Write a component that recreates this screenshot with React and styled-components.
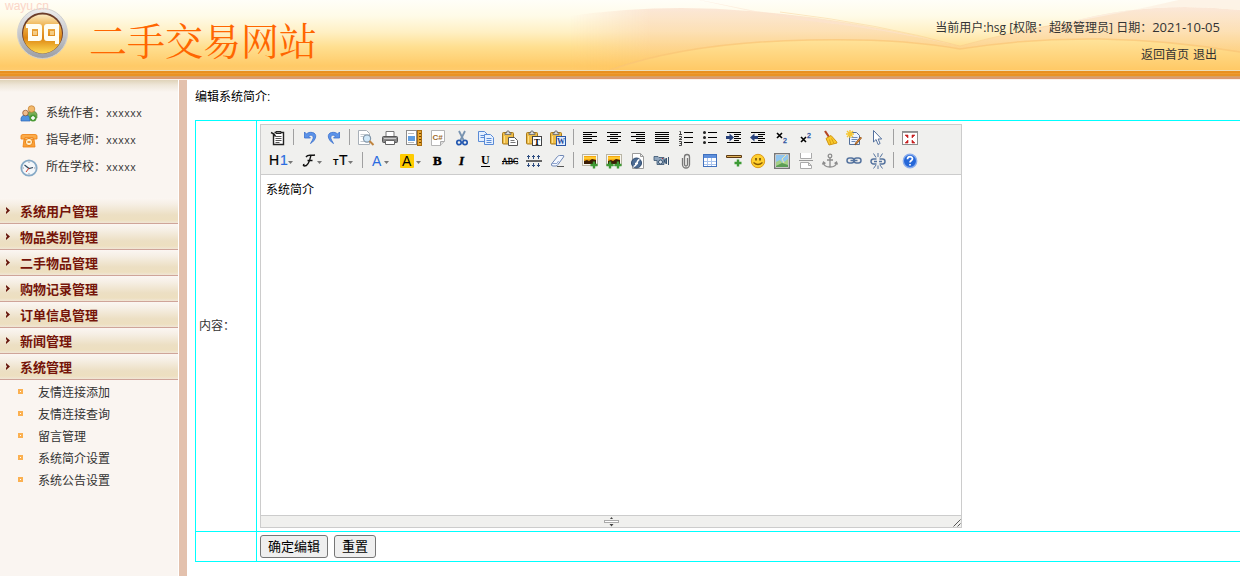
import React from 'react';
import styled, { createGlobalStyle } from 'styled-components';

const GlobalStyle = createGlobalStyle`
  *, *::before, *::after { box-sizing: border-box; }
  body {
    margin: 0;
    background: #fff;
    color: #333;
    font: 12px/16px "Liberation Sans", "Noto Sans CJK SC", sans-serif;
  }
  a { color: inherit; text-decoration: none; }
  ul { list-style: none; margin: 0; padding: 0; }
`;

/* ---------- header ---------- */

const Header = styled.header`
  position: relative;
  display: flex;
  height: 80px;
  padding-bottom: 10px;
  background:
    linear-gradient(#eeddb4 0 1px, #e8901f 1px 3px, #ee9c31 3px 4px, #e99224 4px 6px, #d7a261 6px 7px, #dc9a6e 7px 9px, #fbf0e8 9px 10px) bottom / 100% 10px no-repeat,
    linear-gradient(#fffef8 0, #fffbe8 16px, #fff0c4 32px, #ffdf90 47px, #ffca67 66px, #ffcb6c 70px);
`;

const Waves = styled.svg`
  position: absolute;
  top: 0;
  right: 0;
  width: 670px;
  height: 70px;
`;

const Watermark = styled.span`
  position: absolute;
  top: 0;
  left: 5px;
  z-index: 1;
  font-size: 12px;
  line-height: 12px;
  color: #fbd5c8;
`;

const Brand = styled.div`
  position: relative;
  display: flex;
  align-items: flex-start;
  gap: 21px;
  padding: 8px 0 0 17px;
`;

const SiteName = styled.h1`
  margin: 0;
  padding-top: 7px;
  font-family: "Noto Serif CJK SC", "Noto Sans CJK SC", serif;
  font-size: 38px;
  line-height: 48px;
  font-weight: 400;
  color: #ff6600;
  white-space: nowrap;
`;

const UserInfo = styled.div`
  position: relative;
  margin-left: auto;
  padding: 19px 20px 0 0;
  text-align: right;
  color: #333;
`;

const InfoLine = styled.p`
  margin: 0 0 11px;
  white-space: nowrap;
`;

const Latin = styled.span`
  font-family: "Open Sans", sans-serif;
  font-size: ${(p) => (p.$large ? 13 : 12)}px;
`;

const HeaderLinks = styled.nav`
  display: flex;
  justify-content: flex-end;
  gap: 4px;
  padding-right: 3px;
`;

/* ---------- body layout ---------- */

const Body = styled.div`
  display: grid;
  grid-template-columns: 179px minmax(0, 1fr);
  min-height: calc(100vh - 80px);
`;

const Sidebar = styled.aside`
  border-right: 1px solid #fff;
  background: linear-gradient(#dfd3b9, #eee6d8 5px, #faf5f1 12px) top / 100% 12px no-repeat #faf5f1;
`;

const Facts = styled.ul`
  padding: 20px 0 0 20px;
  height: 118px;
`;

const Fact = styled.li`
  display: flex;
  align-items: center;
  gap: 8px;
  height: 27px;
`;

const FactLabel = styled.span`
  white-space: nowrap;
`;

const FactValue = styled.span`
  font: 10px/16px "Liberation Mono", monospace;
`;

const MenuHeading = styled.button`
  display: flex;
  align-items: center;
  gap: 10px;
  width: 100%;
  height: 26px;
  padding: 2px 0 0 5px;
  border: 0;
  border-bottom: 1px solid #cfa499;
  background: linear-gradient(#fbf6f2 0, #f6efe5 6px, #ecdfc3 17px, #eddfc0 22px, #f0e6d6 25px);
  color: #751409;
  font: bold 13px/16px "Liberation Sans", "Noto Sans CJK SC", sans-serif;
  cursor: pointer;
  svg { margin-bottom: 2px; }
`;

const SubItem = styled.li`
  display: flex;
  align-items: center;
  gap: 15px;
  height: 22px;
  padding-left: 18px;
  a { padding-top: 3px; }
  &::before {
    content: '';
    width: 5px;
    height: 5px;
    border: 2px solid #fbb050;
    background: #fff;
  }
`;

const Main = styled.main`
  border-left: 8px solid #e3c1ad;
  padding: 9px 0 14px 8px;
`;

const PageTitle = styled.h2`
  margin: 0 0 15px;
  font-size: 12px;
  line-height: 16px;
  font-weight: normal;
  color: #000;
`;

const FormGrid = styled.form`
  display: grid;
  grid-template-columns: 60px minmax(0, 1fr);
  border: solid #00ffff;
  border-width: 1px 0 0 1px;
`;

const FormCell = styled.div`
  display: flex;
  align-items: center;
  gap: 6px;
  padding: 3px;
  border: solid #00ffff;
  border-width: 0 0 1px ${(p) => (p.$divided ? '1px' : '0')};
`;

const PushButton = styled.button`
  height: 23px;
  padding: 0 7px;
  border: 1px solid #767676;
  border-radius: 3px;
  background: #efefef;
  color: #000;
  font: 13px/20px "Liberation Sans", "Noto Sans CJK SC", sans-serif;
`;

/* ---------- editor ---------- */

const Editor = styled.div`
  width: 100%;
  max-width: 702px;
  border: 1px solid #ccc;
  background: #fff;
`;

const Toolbar = styled.div`
  padding: 2px 5px 1px;
  border-bottom: 1px solid #ccc;
  background: #f0f0ee;
`;

const ToolRow = styled.div`
  display: flex;
  height: 23px;
`;

const Tool = styled.button`
  display: block;
  flex: none;
  width: ${(p) => p.$width + 8}px;
  height: 22px;
  padding: 3px 4px;
  border: 0;
  background: none;
  cursor: pointer;
  svg { display: block; overflow: visible; }
`;

const Separator = styled.span`
  flex: none;
  width: 1px;
  height: 16px;
  margin: 2px 4px 0 3px;
  background: #a0a0a0;
`;

const TextArea = styled.textarea`
  display: block;
  width: 100%;
  height: 340px;
  padding: 7px 5px;
  border: 0;
  outline: 0;
  resize: none;
  color: #000;
  background: #fff;
  font: 12px/16px "Liberation Sans", "Noto Sans CJK SC", sans-serif;
`;

const StatusBar = styled.div`
  display: grid;
  grid-template-columns: 9px 1fr 9px;
  justify-items: center;
  height: 12px;
  border-top: 1px solid #ccc;
  background: #f0f0ee;
  svg { display: block; }
`;

/* ---------- icons ---------- */

const serif = '"Liberation Serif", serif';
const sans = '"Liberation Sans", sans-serif';

const Lines = ({ rows }) => (
  <g stroke="#000" shapeRendering="crispEdges">
    {rows.map(([a, b], i) => (
      <path key={i} d={`M${a} ${2.5 + i * 2}H${b}`} />
    ))}
  </g>
);
const Caret = ({ x }) => <path d={`M${x} 8h5l-2.500 3z`} fill="#777" />;
const Clipboard = () => (
  <g>
    <rect x=".5" y="2.500" width="11" height="11.500" rx="1" fill="#eebd47" stroke="#a8791a" />
    <path d="M3 4.500V3h1.500l.5-2h2l.5 2H9v1.500z" fill="#ddd" stroke="#666" strokeWidth=".8" />
    <path d="M2.500 6v7" stroke="#ffe08a" />
  </g>
);
const Plus = ({ x, y }) => (
  <path d={`M${x} ${y - 3.5}v7M${x - 3.5} ${y}h7`} stroke="#3d9b35" strokeWidth="2.400" />
);
const Photo = () => (
  <g>
    <rect x=".5" y="1.500" width="15" height="11" fill="#f7f5ee" stroke="#b9b5a5" />
    <rect x="2" y="3" width="12" height="8" fill="#f5a80f" />
    <path d="M2 4h12v2H2z" fill="#ffc92e" />
    <path d="M2 8l3-1 2 1 3-2 4 1v4H2z" fill="#3a1d05" />
  </g>
);
const Page = () => (
  <path d="M2.500 .5h8l3 3v12h-11z M10.500 .5v3h3" fill="#fff" stroke="#9b9b9b" />
);
const CurvedArrow = () => (
  <path d="M2.500 2v6h6L6.500 6c3-2 6 0 4 4l-2 3.500c6-3.500 7-10 2-11C8 2 6 2.500 4.500 4z" fill="#5b93ea" stroke="#3a70cc" strokeWidth=".8" />
);

const ICONS = {
  source: (
    <g fill="none" stroke="#222">
      <path d="M3.500 4v10.500h10V2.500h-9" fill="#fff" strokeWidth="1.400" />
      <path d="M6 1.500h5v2H6z" fill="#888" />
      <path d="M5.500 6.500h6M5.500 8.500h6M5.500 10.500h6M5.500 12.500h4" stroke="#555" />
      <path d="M1 2.500l3 1.500 1.500 2.500" strokeWidth="1.500" />
    </g>
  ),
  undo: <CurvedArrow />,
  redo: <g transform="matrix(-1 0 0 1 16 0)"><CurvedArrow /></g>,
  preview: (
    <g>
      <path d="M.5 .5h8l3 3v11H.5z" fill="#fff" stroke="#a8b0b8" />
      <path d="M2.500 4.500h5M2.500 6.500h3M2.500 11.500h5" stroke="#c3c9cf" />
      <circle cx="9" cy="8.500" r="3.600" fill="#cfe7f8" stroke="#8296a8" strokeWidth="1.200" />
      <path d="M11.500 11l4 4" stroke="#c0843f" strokeWidth="2" />
    </g>
  ),
  print: (
    <g>
      <path d="M4 1.500h8V7H4z" fill="#fff" stroke="#777" />
      <rect x=".5" y="6.500" width="15" height="6" rx="1" fill="#888" stroke="#555" />
      <path d="M2 8.500h12" stroke="#ccc" />
      <path d="M3.500 10.500h9v4h-9z" fill="#fff" stroke="#666" />
    </g>
  ),
  template: (
    <g>
      <rect x=".5" y=".5" width="10" height="14" fill="#fff" stroke="#222" strokeDasharray="1 1" />
      <path d="M2 6h7v5H2z" fill="#5f9de0" />
      <path d="M2 3.500h6M2 12.500h6" stroke="#bbb" />
      <rect x="11.500" y=".5" width="4" height="15" fill="#e8a52f" stroke="#a96d10" />
      <path d="M13 3.500h2M13 6.500h2M13 9.500h2M13 12.500h2" stroke="#6e4300" />
    </g>
  ),
  code: (
    <g>
      <path d="M1.500 .5h13v11l-4 4h-9z" fill="#fff" stroke="#b5b5b5" />
      <path d="M10.500 15.500v-4h4" fill="#ddd" stroke="#aaa" />
      <text x="2.500" y="10" fontSize="8" fontWeight="bold" fontFamily={sans} fill="#a06a2c">C#</text>
    </g>
  ),
  cut: (
    <g fill="none">
      <path d="M5 1l4.500 9M11 1L6.500 10" stroke="#7893b0" strokeWidth="1.800" />
      <circle cx="5" cy="12.500" r="2.200" stroke="#2458b0" strokeWidth="1.700" />
      <circle cx="11" cy="12.500" r="2.200" stroke="#2458b0" strokeWidth="1.700" />
    </g>
  ),
  copy: (
    <g fill="#e5f0ff" stroke="#5a8bd6">
      <path d="M.5 1.500h6l3 3v7h-9z" />
      <path d="M2.500 5.500h4M2.500 7.500h4" />
      <path d="M6.500 4.500h6l3 3v7h-9z" />
      <path d="M8.500 8.500h5M8.500 10.500h5M8.500 12.500h5" />
    </g>
  ),
  paste: (
    <g>
      <Clipboard />
      <path d="M6.500 7.500h6l3 3v5h-9z" fill="#fff" stroke="#555" />
      <path d="M8.500 10.500h4M8.500 12.500h5" stroke="#777" />
    </g>
  ),
  plainpaste: (
    <g>
      <Clipboard />
      <rect x="6.500" y="6.500" width="9" height="9" fill="#fff" stroke="#444" />
      <text x="8" y="14.500" fontSize="9" fontWeight="bold" fontFamily={serif}>T</text>
    </g>
  ),
  wordpaste: (
    <g>
      <Clipboard />
      <rect x="6.500" y="6.500" width="9" height="9" fill="#e2edff" stroke="#2a56a5" />
      <text x="7" y="14" fontSize="8" fontWeight="bold" fontFamily={serif} fill="#1a4798">W</text>
    </g>
  ),
  justifyleft: <Lines rows={[[1, 15], [1, 10], [1, 15], [1, 10], [1, 15], [1, 10]]} />,
  justifycenter: <Lines rows={[[1, 15], [4, 12], [1, 15], [4, 12], [1, 15], [4, 12]]} />,
  justifyright: <Lines rows={[[1, 15], [6, 15], [1, 15], [6, 15], [1, 15], [6, 15]]} />,
  justifyfull: <Lines rows={[[1, 15], [1, 15], [1, 15], [1, 15], [1, 15], [1, 15]]} />,
  ordered: (
    <g>
      <path d="M6 2.500h9M6 7.500h9M6 12.500h9" stroke="#000" shapeRendering="crispEdges" />
      <path d="M1.500 1.500h1v3M1 4.500h3M1 6.500h2.500v1.500L1 9.500h3M1 11.500h2.500v4H1M1.500 13.500h2" fill="none" stroke="#333" strokeWidth=".9" />
    </g>
  ),
  unordered: (
    <g>
      <path d="M6 2.500h9M6 7.500h9M6 12.500h9" stroke="#000" shapeRendering="crispEdges" />
      <circle cx="2.500" cy="2.500" r="1.500" fill="#222" />
      <circle cx="2.500" cy="7.500" r="1.500" fill="#222" />
      <circle cx="2.500" cy="12.500" r="1.500" fill="#222" />
    </g>
  ),
  indent: (
    <g>
      <path d="M1 2.500h14M8 4.500h7M8 6.500h5M8 8.500h7M8 10.500h5M1 12.500h14" stroke="#000" shapeRendering="crispEdges" />
      <path d="M0 3h8v9H0z" fill="#f0f0ee" />
      <path d="M0 6h3.500V3.500L8 7.500l-4.500 4V9H0z" fill="#28427c" />
    </g>
  ),
  outdent: (
    <g>
      <path d="M1 2.500h14M8 4.500h7M8 6.500h5M8 8.500h7M8 10.500h5M1 12.500h14" stroke="#000" shapeRendering="crispEdges" />
      <path d="M0 3h8v9H0z" fill="#f0f0ee" />
      <path d="M8 6H4.500V3.500L0 7.500l4.500 4V9H8z" fill="#28427c" />
    </g>
  ),
  subscript: (
    <g fontFamily={sans}>
      <path d="M3 3l5 5M8 3L3 8" stroke="#000" strokeWidth="1.600" />
      <text x="9" y="13" fontSize="7" fill="#264f9c" stroke="#264f9c" strokeWidth=".3">2</text>
    </g>
  ),
  superscript: (
    <g fontFamily={sans}>
      <path d="M3 7l5 5M8 7l-5 5" stroke="#000" strokeWidth="1.600" />
      <text x="9" y="8" fontSize="7" fill="#264f9c" stroke="#264f9c" strokeWidth=".3">2</text>
    </g>
  ),
  broom: (
    <g>
      <path d="M3 1l4 6" stroke="#b54524" strokeWidth="2.200" />
      <path d="M4 8.500l5-3 5.500 6 .5 1.500-8 2z" fill="#f9c92b" stroke="#d2950f" />
      <path d="M7.500 9.500l1.500 5M9.500 8.500l2.500 5" stroke="#d99f14" />
    </g>
  ),
  quickformat: (
    <g>
      <path d="M3.500 2.500h7l3 3v9h-10z" fill="#eef4ff" stroke="#54709a" />
      <path d="M5.500 7.500h6M5.500 9.500h6M5.500 11.500h4" stroke="#6e8bb8" />
      <path d="M4 0v8M0 4h8M1 1l6 6M7 1L1 7" stroke="#f5c632" strokeWidth="1.400" />
      <path d="M15.500 8l-5 6-1.500 1 .5-2 5-6z" fill="#e0903a" stroke="#8c4a12" strokeWidth=".8" />
    </g>
  ),
  cursor: <path d="M3.500 .5v11.500l2.600-2.500 2 5 2-1-2-4.500h3.600z" fill="#fff" stroke="#54719e" />,
  fullscreen: (
    <g>
      <rect x=".5" y="1.500" width="15" height="13" fill="#fff" stroke="#8e8e8e" />
      <path d="M1 2.500h14" stroke="#999" />
      <path d="M3 5h3v3zM13 5h-3v3zM3 13h3v-3zM13 13h-3v-3z" fill="#c81e1e" stroke="#c81e1e" strokeWidth=".6" />
    </g>
  ),
  heading: (
    <g fontFamily={sans} fontSize="14">
      <text x="-1" y="12" stroke="#000" strokeWidth=".2">H</text>
      <text x="10" y="12" fill="#2a6be0" stroke="#2a6be0" strokeWidth=".2">1</text>
      <Caret x={18} />
    </g>
  ),
  fontname: (
    <g>
      <path d="M3 4c2-3 4-1 9-2M8 2C7 6 6 13 1.500 13 0 13 0 11.500 1.500 11.500M4.500 7.500h5" fill="none" stroke="#111" strokeWidth="1.400" />
      <Caret x={14} />
    </g>
  ),
  fontsize: (
    <g fontFamily={sans}>
      <text x="1" y="12" fontSize="9" fontWeight="bold">T</text>
      <text x="7" y="12" fontSize="14" stroke="#000" strokeWidth=".2">T</text>
      <Caret x={16} />
    </g>
  ),
  forecolor: (
    <g fontFamily={sans}>
      <text x="1" y="13" fontSize="14" fill="#2a6be0">A</text>
      <Caret x={13} />
    </g>
  ),
  hilitecolor: (
    <g fontFamily={sans}>
      <rect x="1" y="1" width="14" height="14" rx="1" fill="#ffcc00" />
      <text x="3" y="13" fontSize="14">A</text>
      <Caret x={17} />
    </g>
  ),
  bold: <text x="3" y="12" fontSize="13" fontWeight="bold" fontFamily={serif} stroke="#000" strokeWidth=".5">B</text>,
  italic: <text x="5" y="12" fontSize="13" fontWeight="bold" fontStyle="italic" fontFamily={serif} stroke="#000" strokeWidth=".4">I</text>,
  underline: (
    <g>
      <text x="3" y="11" fontSize="12" fontWeight="bold" fontFamily={serif}>U</text>
      <path d="M3 13.500h9" stroke="#000" />
    </g>
  ),
  strike: (
    <g>
      <text x="0" y="11" fontSize="8" fontFamily={serif} stroke="#000" strokeWidth=".3">ABC</text>
      <path d="M0 8.500h16" stroke="#000" />
    </g>
  ),
  lineheight: (
    <g stroke="#2d4c80">
      <path d="M0 8h16" stroke="#666" strokeWidth="2" />
      <path d="M2.500 2v4M7.500 2v4M12.500 2v4M2.500 10v4M7.500 10v4M12.500 10v4" />
      <path d="M1 3.500h3M6 3.500h3M11 3.500h3M1 12.500h3M6 12.500h3M11 12.500h3" />
    </g>
  ),
  eraser: (
    <g>
      <path d="M1.500 11l6-7.500q1-1 2-1h3.500q1.500 0 .5 1.500l-5.500 7.500q-1 1.500-2 1.500H3q-2 0-1.500-2z" fill="#f4f8ff" stroke="#6f87b4" />
      <path d="M2 10.500h5l1.500-2.500" fill="none" stroke="#8ea4cf" />
      <path d="M7 13.500h7" stroke="#555" />
    </g>
  ),
  image: <g><Photo /><Plus x={12} y={12} /></g>,
  multiimage: <g><Photo /><Plus x={4} y={12} /><Plus x={12} y={12} /></g>,
  flash: (
    <g>
      <Page />
      <circle cx="6.500" cy="10" r="5" fill="#4b6b93" stroke="#304b6e" />
      <path d="M9.500 6.500c-3 0-2 7-6 7M5 10.500h3" fill="none" stroke="#fff" strokeWidth="1.500" />
    </g>
  ),
  media: (
    <g>
      <path d="M0 3.500h4l1 1h5v7H3V7.500H0z" fill="#8fa5bd" stroke="#39536f" strokeWidth=".8" />
      <circle cx="6.500" cy="9" r="2" fill="#dfe8f1" stroke="#39536f" />
      <path d="M10.500 7l2-2v6l-2-2zM14.500 4v8" fill="#5d7b99" stroke="#39536f" />
      <path d="M8 5.500h1" stroke="#b72b2b" />
    </g>
  ),
  file: (
    <path d="M4.500 5v6.500a3.500 3.500 0 007 0V4a2.500 2.500 0 00-5 0v7.500a1.500 1.500 0 003 0V5" fill="none" stroke="#777" strokeWidth="1.300" />
  ),
  table: (
    <g>
      <rect x="1.500" y="1.500" width="13" height="12" fill="#fff" stroke="#3f70bd" />
      <path d="M2 2h12v3H2z" fill="#5d8fdc" />
      <path d="M2 8.500h12M2 11.500h12M5.500 5v8M9.500 5v8" stroke="#a9c4ee" />
    </g>
  ),
  hr: (
    <g>
      <rect y="2" width="16" height="3" rx="1" fill="#5c3a12" />
      <path d="M1 3.500h14" stroke="#e1b35c" />
      <Plus x={12} y={10} />
    </g>
  ),
  smile: (
    <g>
      <circle cx="8" cy="8" r="6.700" fill="#ffd02e" stroke="#dc9a1b" />
      <path d="M6 5v2.500M10 5v2.500" stroke="#5b3b00" strokeWidth="1.400" />
      <path d="M3.500 9.500q4.500 4 9 0" fill="none" stroke="#8a5a00" strokeWidth="1.200" />
    </g>
  ),
  map: (
    <g>
      <rect x=".7" y=".7" width="14.600" height="14.600" fill="#fff" stroke="#777" strokeWidth="1.400" />
      <path d="M2 2h12v12H2z" fill="#91c6ef" />
      <path d="M2 9l4-2 3 3 5-4v8H2z" fill="#a5d088" />
      <path d="M2 13l6-3 6 2v2H2z" fill="#5c9e55" />
      <path d="M12 2l-4 4 2 4" fill="none" stroke="#f6e8a1" />
    </g>
  ),
  pagebreak: (
    <g fill="#fff" stroke="#aaa">
      <path d="M2.500 0v5.500h11V0" />
      <path d="M1 7.500h14" stroke="#999" />
      <path d="M2.500 15.500v-6h8l3 3v3zM10.500 9.500v3h3" />
    </g>
  ),
  anchor: (
    <g fill="none" stroke="#8d8d8d" strokeWidth="1.300">
      <circle cx="8" cy="3" r="1.800" />
      <path d="M8 5v9.500M5 7h6M1.500 9.500c.5 6 12.500 6 13 0M.5 11.500l1-2.500 2 1.500M15.500 11.500l-1-2.500-2 1.500" />
    </g>
  ),
  link: (
    <g fill="none" stroke="#56749f" strokeWidth="1.500">
      <rect x="1" y="5" width="7" height="5" rx="2.500" />
      <rect x="8" y="5" width="7" height="5" rx="2.500" />
      <path d="M4.500 7.500h7" />
    </g>
  ),
  unlink: (
    <g fill="none" stroke="#56749f" strokeWidth="1.500">
      <path d="M6.500 11H3.500a2.500 2.500 0 010-5h3M9.500 6h3a2.500 2.500 0 010 5h-3M4 8.500h3M9 8.500h3" />
      <path d="M8 0v4M3.500 .5l2.500 4M12.500 .5l-2.500 4M8 12.500V16M6 12l-2.500 3.500M10 12l2.500 3.500" strokeWidth="1" />
    </g>
  ),
  about: (
    <g>
      <circle cx="8" cy="8" r="6.700" fill="#2567d8" stroke="#88aced" strokeWidth="1.400" />
      <path d="M5.500 6.300c0-3.500 5-3.300 5-.5C10.500 7.500 8 7.600 8 9.500M8 11v1.500" fill="none" stroke="#fff" strokeWidth="1.700" />
    </g>
  ),
};

const ROW_ONE = [
  'source', '|', 'undo', 'redo', '|', 'preview', 'print', 'template', 'code', 'cut', 'copy', 'paste', 'plainpaste',
  'wordpaste', '|', 'justifyleft', 'justifycenter', 'justifyright', 'justifyfull', 'ordered', 'unordered', 'indent',
  'outdent', 'subscript', 'superscript', 'broom', 'quickformat', 'cursor', '|', 'fullscreen',
];
const ROW_TWO = [
  'heading', 'fontname', 'fontsize', '|', 'forecolor', 'hilitecolor', 'bold', 'italic', 'underline', 'strike',
  'lineheight', 'eraser', '|', 'image', 'multiimage', 'flash', 'media', 'file', 'table', 'hr', 'smile', 'map',
  'pagebreak', 'anchor', 'link', 'unlink', '|', 'about',
];
const WIDE = { heading: 25, fontname: 21, fontsize: 23, forecolor: 20, hilitecolor: 23 };

function Tools({ names }) {
  return (
    <ToolRow>
      {names.map((name, i) => {
        if (name === '|') return <Separator key={i} />;
        const w = WIDE[name] || 16;
        return (
          <Tool key={i} type="button" aria-label={name} $width={w}>
            <svg width={w} height="16" viewBox={`0 0 ${w} 16`}>{ICONS[name]}</svg>
          </Tool>
        );
      })}
    </ToolRow>
  );
}

const Logo = () => (
  <svg width="51" height="51" viewBox="0 0 51 51" aria-hidden="true">
    <defs>
      <linearGradient id="ring" x1="0" y1="0" x2="0" y2="1">
        <stop offset="0" stopColor="#eeeeee" />
        <stop offset=".5" stopColor="#c6c8cc" />
        <stop offset="1" stopColor="#9b9da3" />
      </linearGradient>
      <linearGradient id="core" x1="0" y1="0" x2="0" y2="1">
        <stop offset="0" stopColor="#fbeac2" />
        <stop offset=".3" stopColor="#eeb04a" />
        <stop offset=".6" stopColor="#dc8410" />
        <stop offset="1" stopColor="#ffdc55" />
      </linearGradient>
    </defs>
    <circle cx="25.500" cy="25.500" r="25" fill="url(#ring)" stroke="#cfcfd0" />
    <circle cx="25.500" cy="25" r="20.500" fill="#6b3d2a" />
    <circle cx="25.500" cy="26" r="19.500" fill="url(#core)" />
    <path
      fillRule="evenodd"
      fill="#fffdf2"
      d="M9 16h13q3 0 3 3v11q0 3-3 3H11V20H9zM15 21v7h6v-7zM30 16h12v20h-4v-3h-8q-3 0-3-3V19q0-3 3-3zM31 21v7h7v-7z"
    />
    <path d="M16 23h4v4h-4zM33 23h4v4h-4z" fill="#fff0c0" opacity=".6" />
  </svg>
);

const HeaderWaves = () => (
  <Waves viewBox="0 0 670 70" aria-hidden="true">
    <defs>
      <linearGradient id="haze" gradientUnits="userSpaceOnUse" x1="0" y1="5" x2="0" y2="70">
        <stop offset="0" stopColor="#fbe6d9" stopOpacity=".9" />
        <stop offset=".4" stopColor="#fddfb4" stopOpacity=".9" />
        <stop offset="1" stopColor="#ffc65c" stopOpacity=".9" />
      </linearGradient>
      <linearGradient id="dune" gradientUnits="userSpaceOnUse" x1="0" y1="38" x2="0" y2="70">
        <stop offset="0" stopColor="#ffe49c" />
        <stop offset="1" stopColor="#ffc966" />
      </linearGradient>
      <linearGradient id="fade" x1="0" x2="1">
        <stop offset="0" stopColor="#000" />
        <stop offset=".12" stopColor="#fff" />
      </linearGradient>
      <mask id="edge"><rect width="670" height="70" fill="url(#fade)" /></mask>
    </defs>
    <g mask="url(#edge)">
      <path d="M0 16Q90 3 180 11Q280 18 390 46Q450 30 500 22Q580 0 670 10V70H0z" fill="url(#haze)" />
      <path d="M120-2Q180 10 230 20Q310 28 390 46Q290 22 180 11z" fill="#fbe3d0" opacity=".6" />
      <path d="M500 22Q560 12 625-4H670V10Q580 0 500 22z" fill="#fdf0e2" opacity=".8" />
    </g>
    <path d="M40 70Q120 42 240 40Q330 38 390 49Q460 38 530 39Q600 40 670 52V70z" fill="url(#dune)" />
    <path d="M40 70Q120 42 240 40Q330 38 390 49Q460 38 530 39Q600 40 670 52" fill="none" stroke="#fac476" strokeWidth="1.500" opacity=".7" />
    <path d="M210 12Q310 24 390 46Q440 32 500 22" fill="none" stroke="#f8c884" opacity=".4" />
  </Waves>
);

const PeopleIcon = () => (
  <svg width="18" height="18" viewBox="0 0 18 18" aria-hidden="true">
    <path d="M7 13V9q1-3 5-3t5 3v4z" fill="#78ad55" stroke="#4f8036" strokeWidth=".6" />
    <circle cx="11.500" cy="4" r="3.300" fill="#f2b86b" stroke="#c07c2e" strokeWidth=".7" />
    <path d="M1 16v-3q1-3 4.500-3t4.500 3v3z" fill="#4f92df" stroke="#2b65b4" strokeWidth=".7" />
    <circle cx="5.500" cy="8" r="2.800" fill="#f0bd8c" stroke="#8b4d26" strokeWidth=".7" />
    <circle cx="13" cy="13" r="3.500" fill="#4b9b36" />
    <path d="M13 11v4M11 13h4" stroke="#fff" strokeWidth="1.400" />
  </svg>
);
const PhoneIcon = () => (
  <svg width="18" height="18" viewBox="0 0 18 18" aria-hidden="true">
    <path d="M3 15l1-8h10l1 8z" fill="#f9a13a" stroke="#ef7d0c" strokeWidth=".8" />
    <path d="M1 7V4q0-1.500 2-1.500h12q2 0 2 1.500v3h-4V5.500H5V7z" fill="#fbab4a" stroke="#ef7d0c" strokeWidth=".8" />
    <circle cx="9" cy="10" r="3.600" fill="#fff0cf" stroke="#e98413" />
    <path d="M7.500 10h3" stroke="#e07b0b" strokeWidth="1.500" />
  </svg>
);
const ClockIcon = () => (
  <svg width="18" height="18" viewBox="0 0 18 18" aria-hidden="true">
    <circle cx="9" cy="9" r="7.700" fill="#f4f7fa" stroke="#86a9c6" strokeWidth="1.800" />
    <path d="M9 2.500V4M9 14v1.500M2.500 9H4M14 9h1.500" stroke="#99a" />
    <path d="M4.500 6L9 9.500l4-1" fill="none" stroke="#34495e" strokeWidth="1.200" />
    <path d="M9 9l-3 4" stroke="#cf3c2a" />
  </svg>
);

const Arrow = () => (
  <svg width="5" height="8" viewBox="0 0 5 8" aria-hidden="true">
    <path d="M1 0l4 3.500L1 7V5l1-1.500L1 2z" fill="#67170d" />
  </svg>
);

/* ---------- page ---------- */

const FACTS = [
  [PeopleIcon, '系统作者：', 'xxxxxx'],
  [PhoneIcon, '指导老师：', 'xxxxx'],
  [ClockIcon, '所在学校：', 'xxxxx'],
];
const MENU = ['系统用户管理', '物品类别管理', '二手物品管理', '购物记录管理', '订单信息管理', '新闻管理', '系统管理'];
const SUBMENU = ['友情连接添加', '友情连接查询', '留言管理', '系统简介设置', '系统公告设置'];

export default function App() {
  return (
    <>
      <GlobalStyle />
      <Header>
        <HeaderWaves />
        <Watermark>wayu.cn</Watermark>
        <Brand>
          <Logo />
          <SiteName>二手交易网站</SiteName>
        </Brand>
        <UserInfo>
          <InfoLine>
            当前用户<Latin>:hsg [</Latin>权限：超级管理员<Latin>] </Latin>日期：<Latin $large>2021-10-05</Latin>
          </InfoLine>
          <HeaderLinks>
            <a href="#home">返回首页</a>
            <a href="#logout">退出</a>
          </HeaderLinks>
        </UserInfo>
      </Header>
      <Body>
        <Sidebar>
          <Facts>
            {FACTS.map(([Icon, label, value]) => (
              <Fact key={label}>
                <Icon />
                <span>
                  <FactLabel>{label}</FactLabel>
                  <FactValue>{value}</FactValue>
                </span>
              </Fact>
            ))}
          </Facts>
          <nav>
            {MENU.map((name) => (
              <MenuHeading key={name} type="button"><Arrow />{name}</MenuHeading>
            ))}
            <ul>
              {SUBMENU.map((name) => (
                <SubItem key={name}><a href="#page">{name}</a></SubItem>
              ))}
            </ul>
          </nav>
        </Sidebar>
        <Main>
          <PageTitle>编辑系统简介:</PageTitle>
          <FormGrid>
            <FormCell><label htmlFor="content">内容：</label></FormCell>
            <FormCell $divided>
              <Editor>
                <Toolbar>
                  <Tools names={ROW_ONE} />
                  <Tools names={ROW_TWO} />
                </Toolbar>
                <TextArea id="content" defaultValue="系统简介" />
                <StatusBar>
                  <span />
                  <svg width="15" height="11" viewBox="0 0 15 11" aria-hidden="true">
                    <path d="M6 3h3L7.500 1zM5.500 8h4l-2 2.500z" fill="#444" />
                    <rect x=".5" y="4.500" width="14" height="2" fill="#fff" stroke="#aaa" />
                  </svg>
                  <svg width="9" height="11" viewBox="0 0 9 11" aria-hidden="true">
                    <path d="M1.500 10.500l7-7M5.500 10.500l3-3" stroke="#555" />
                  </svg>
                </StatusBar>
              </Editor>
            </FormCell>
            <FormCell />
            <FormCell $divided>
              <PushButton type="submit">确定编辑</PushButton>
              <PushButton type="reset">重置</PushButton>
            </FormCell>
          </FormGrid>
        </Main>
      </Body>
    </>
  );
}
